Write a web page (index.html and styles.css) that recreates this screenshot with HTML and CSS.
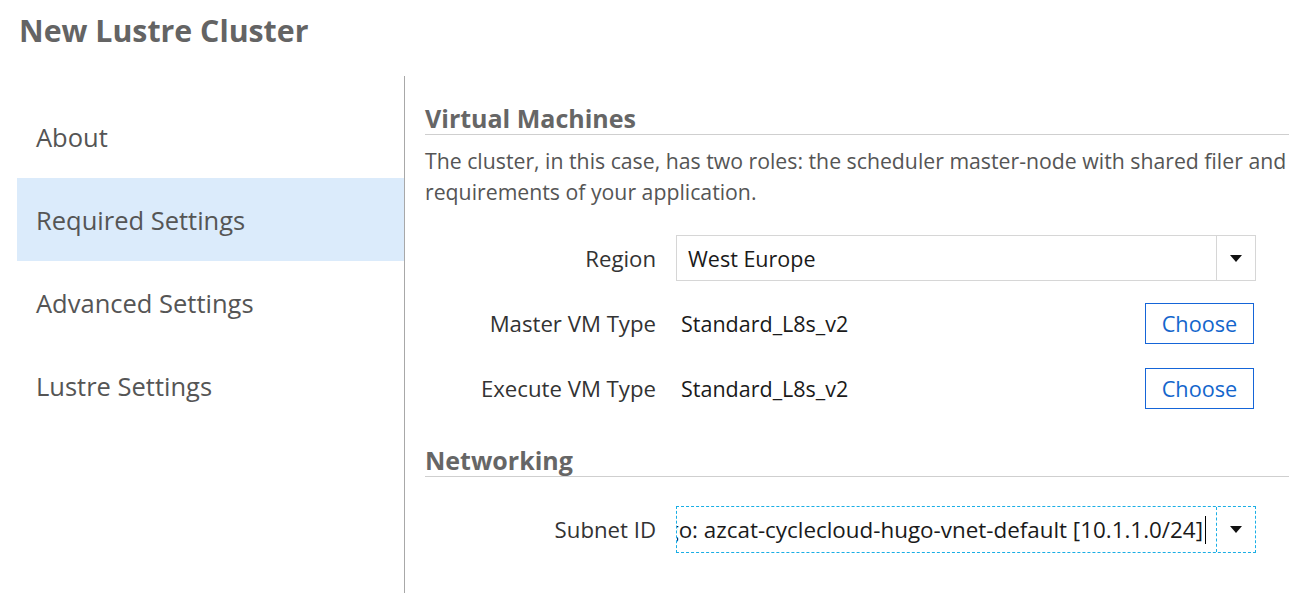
FILE: index.html
```html
<!DOCTYPE html>
<html>
<head>
<meta charset="utf-8">
<link rel="stylesheet" href="styles.css">
</head>
<body>
<div class="page">
  <h1 class="title">New Lustre Cluster</h1>
  <div class="layout">
    <nav class="sidebar">
      <div class="nav-item">About</div>
      <div class="nav-item active">Required Settings</div>
      <div class="nav-item">Advanced Settings</div>
      <div class="nav-item">Lustre Settings</div>
    </nav>
    <main class="main">
      <h2 class="section-title">Virtual Machines</h2>
      <p class="desc">The cluster, in this case, has two roles: the scheduler master-node with shared filer and the execute hosts. Parameter values must be sized to the<br>requirements of your application.</p>
      <div class="form">
        <div class="row">
          <label class="label">Region</label>
          <div class="select">
            <span class="select-value">West Europe</span>
            <span class="select-arrow"><span class="tri"></span></span>
          </div>
        </div>
        <div class="row">
          <label class="label">Master VM Type</label>
          <div class="value">
            <span class="value-text">Standard_L8s_v2</span>
            <button class="btn">Choose</button>
          </div>
        </div>
        <div class="row">
          <label class="label">Execute VM Type</label>
          <div class="value">
            <span class="value-text">Standard_L8s_v2</span>
            <button class="btn">Choose</button>
          </div>
        </div>
      </div>
      <h2 class="section-title net">Networking</h2>
      <div class="form form-net">
        <div class="row row-net">
          <label class="label">Subnet ID</label>
          <div class="select focused">
            <span class="select-value scroll"><span class="scroll-inner">azcat-cyclecloud-rg-hugo: azcat-cyclecloud-hugo-vnet-default [10.1.1.0/24]<span class="caret"></span></span></span>
            <span class="select-arrow"><span class="tri"></span></span>
          </div>
        </div>
      </div>
    </main>
  </div>
</div>
</body>
</html>
```
FILE: styles.css
```css
html, body {
  margin: 0;
  padding: 0;
  background: #fff;
  overflow: hidden;
}
body {
  font-family: "Open Sans", "Noto Sans", sans-serif;
  width: 1289px;
  height: 593px;
}
.page {
  display: flex;
  flex-direction: column;
  height: 593px;
}
.title {
  margin: 0;
  padding: 11px 0 0 19px;
  height: 65px;
  font-size: 30.3px;
  line-height: 40px;
  font-weight: 700;
  color: #646464;
}
.layout {
  display: flex;
  flex: 1;
  min-height: 0;
}
.sidebar {
  margin-left: 17px;
  width: 387px;
  flex: none;
  border-right: 1px solid #a8a8a8;
  padding-top: 19px;
  display: flex;
  flex-direction: column;
}
.nav-item {
  height: 83px;
  display: flex;
  align-items: center;
  padding-left: 19px;
  font-size: 25.5px;
  color: #555;
}
.nav-item.active {
  background: #dbebfb;
}
.main {
  flex: 1;
  min-width: 0;
  padding: 26px 0 0 20px;
  overflow: hidden;
}
.section-title {
  margin: 0;
  font-size: 25px;
  line-height: 32px;
  font-weight: 700;
  color: #666;
  border-bottom: 1px solid #cfcfcf;
  white-space: nowrap;
}
.section-title.net {
  margin-top: 33px;
}
.desc {
  margin: 10px 0 0;
  font-size: 21.25px;
  line-height: 31px;
  color: #555;
  white-space: nowrap;
}
.form {
  margin-top: 28px;
  display: flex;
  flex-direction: column;
  gap: 19px;
}
.form-net {
  margin-top: 29px;
}
.row {
  display: grid;
  grid-template-columns: 231px 580px;
  column-gap: 20px;
  height: 46px;
  align-items: center;
}
.row-net {
  height: 47px;
}
.label {
  text-align: right;
  font-size: 22.2px;
  color: #333;
}
.select {
  height: 100%;
  box-sizing: border-box;
  border: 1px solid #d6d6d6;
  display: flex;
  align-items: stretch;
}
.select-value {
  flex: 1;
  min-width: 0;
  display: flex;
  align-items: center;
  padding-left: 11px;
  font-size: 21.5px;
  color: #1a1a1a;
}
.select-arrow {
  width: 38px;
  flex: none;
  border-left: 1px solid #d6d6d6;
  display: flex;
  align-items: center;
  justify-content: center;
}
.tri {
  width: 0;
  height: 0;
  border-left: 6px solid transparent;
  border-right: 6px solid transparent;
  border-top: 7px solid #111;
}
.select.focused {
  border: 1px dashed #1aaee5;
}
.select.focused .select-arrow {
  border-left: 1px dashed #1aaee5;
}
.scroll {
  overflow: hidden;
  justify-content: flex-end;
  padding-left: 7px;
  padding-right: 10px;
  font-size: 22.4px;
}
.scroll-inner {
  white-space: nowrap;
  display: flex;
  align-items: center;
  flex: none;
}
.caret {
  display: inline-block;
  width: 1px;
  height: 28px;
  background: #000;
  margin-left: 2px;
}
.value {
  display: flex;
  align-items: center;
  justify-content: space-between;
  padding-left: 5px;
  padding-right: 2px;
}
.value-text {
  font-size: 21.5px;
  color: #1a1a1a;
}
.btn {
  width: 109px;
  height: 41px;
  border: 1px solid #1565d8;
  background: #fff;
  color: #1466cc;
  font-family: inherit;
  font-size: 21.7px;
  padding: 0;
  cursor: pointer;
}
```
